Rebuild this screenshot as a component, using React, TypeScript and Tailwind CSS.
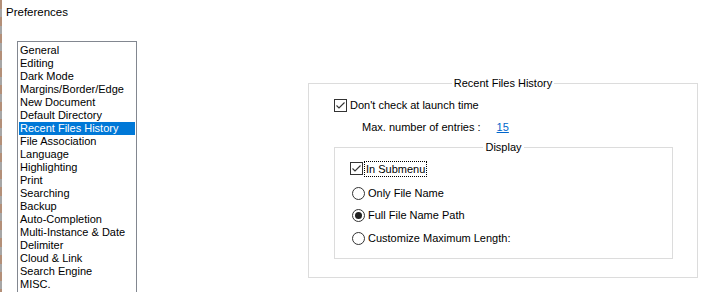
import React from "react";

const items = [
  "General",
  "Editing",
  "Dark Mode",
  "Margins/Border/Edge",
  "New Document",
  "Default Directory",
  "Recent Files History",
  "File Association",
  "Language",
  "Highlighting",
  "Print",
  "Searching",
  "Backup",
  "Auto-Completion",
  "Multi-Instance & Date",
  "Delimiter",
  "Cloud & Link",
  "Search Engine",
  "MISC.",
];

function CheckBox() {
  return (
    <svg width="13" height="13" viewBox="0 0 13 13" className="shrink-0 block">
      <rect x="0.5" y="0.5" width="12" height="12" fill="#fff" stroke="#333" />
      <polyline points="2.5,6.5 5,9 10.5,3.5" fill="none" stroke="#333" strokeWidth="1.1" />
    </svg>
  );
}

function Radio({ on }: { on?: boolean }) {
  return (
    <svg width="13" height="13" viewBox="0 0 13 13" className="shrink-0 block">
      <circle cx="6.5" cy="6.5" r="6" fill="#fff" stroke="#333" />
      {on && <circle cx="6.5" cy="6.5" r="3.5" fill="#222" />}
    </svg>
  );
}

export default function App() {
  return (
    <div
      className="w-[705px] h-[292px] bg-white overflow-hidden flex text-[11px] leading-[13px] text-black"
      style={{ fontFamily: '"Liberation Sans", Arial, sans-serif' }}
    >
      <div className="w-[2px] h-full shrink-0 bg-[repeating-linear-gradient(to_bottom,#b38f78_0px,#b38f78_9px,#a6a6a6_9px,#a6a6a6_17px)]" />
      <div className="flex flex-col flex-1">
        <div className="pl-[4px] pt-[6px] h-[19px] text-[11.5px] leading-[13px]">Preferences</div>
        <div className="flex">
          <div className="ml-[15px] mt-[22px] w-[120px] h-[260px] border border-[#828790] px-[1px] pt-[2px] shrink-0">
            {items.map((it) => (
              <div
                key={it}
                className={
                  it === "Recent Files History"
                    ? "h-[13px] pl-[1px] bg-[#0078d7] text-white whitespace-nowrap"
                    : "h-[13px] pl-[1px] whitespace-nowrap"
                }
              >
                {it}
              </div>
            ))}
          </div>
          <div className="ml-[171px] mt-[64px] w-[390px] h-[195px] border border-[#dcdcdc] relative shrink-0">
            <div className="absolute -top-[7px] left-0 right-0 flex justify-center">
              <span className="bg-white px-[2px]">Recent Files History</span>
            </div>
            <div className="pl-[25px] pt-[15px] flex flex-col">
              <div className="flex items-center h-[13px]">
                <CheckBox />
                <span className="ml-[3px]">Don't check at launch time</span>
              </div>
              <div className="flex items-center h-[13px] mt-[9px] pl-[28px]">
                <span>Max. number of entries :</span>
                <span className="ml-[16px] text-[#0066cc] underline">15</span>
              </div>
              <div className="mt-[13px] w-[339px] h-[112px] border border-[#dcdcdc] relative">
                <div className="absolute -top-[7px] left-0 right-0 flex justify-center">
                  <span className="bg-white px-[2px]">Display</span>
                </div>
                <div className="pl-[15px] pt-[14px] flex flex-col">
                  <div className="flex items-center h-[13px]">
                    <CheckBox />
                    <span className="ml-[1px] px-[1px] border border-dotted border-black leading-[14px]">
                      In Submenu
                    </span>
                  </div>
                  <div className="flex items-center h-[13px] mt-[12px] pl-[2px]">
                    <Radio />
                    <span className="ml-[3px]">Only File Name</span>
                  </div>
                  <div className="flex items-center h-[13px] mt-[9px] pl-[2px]">
                    <Radio on />
                    <span className="ml-[3px]">Full File Name Path</span>
                  </div>
                  <div className="flex items-center h-[13px] mt-[10px] pl-[2px]">
                    <Radio />
                    <span className="ml-[3px]">Customize Maximum Length:</span>
                  </div>
                </div>
              </div>
            </div>
          </div>
        </div>
      </div>
    </div>
  );
}
